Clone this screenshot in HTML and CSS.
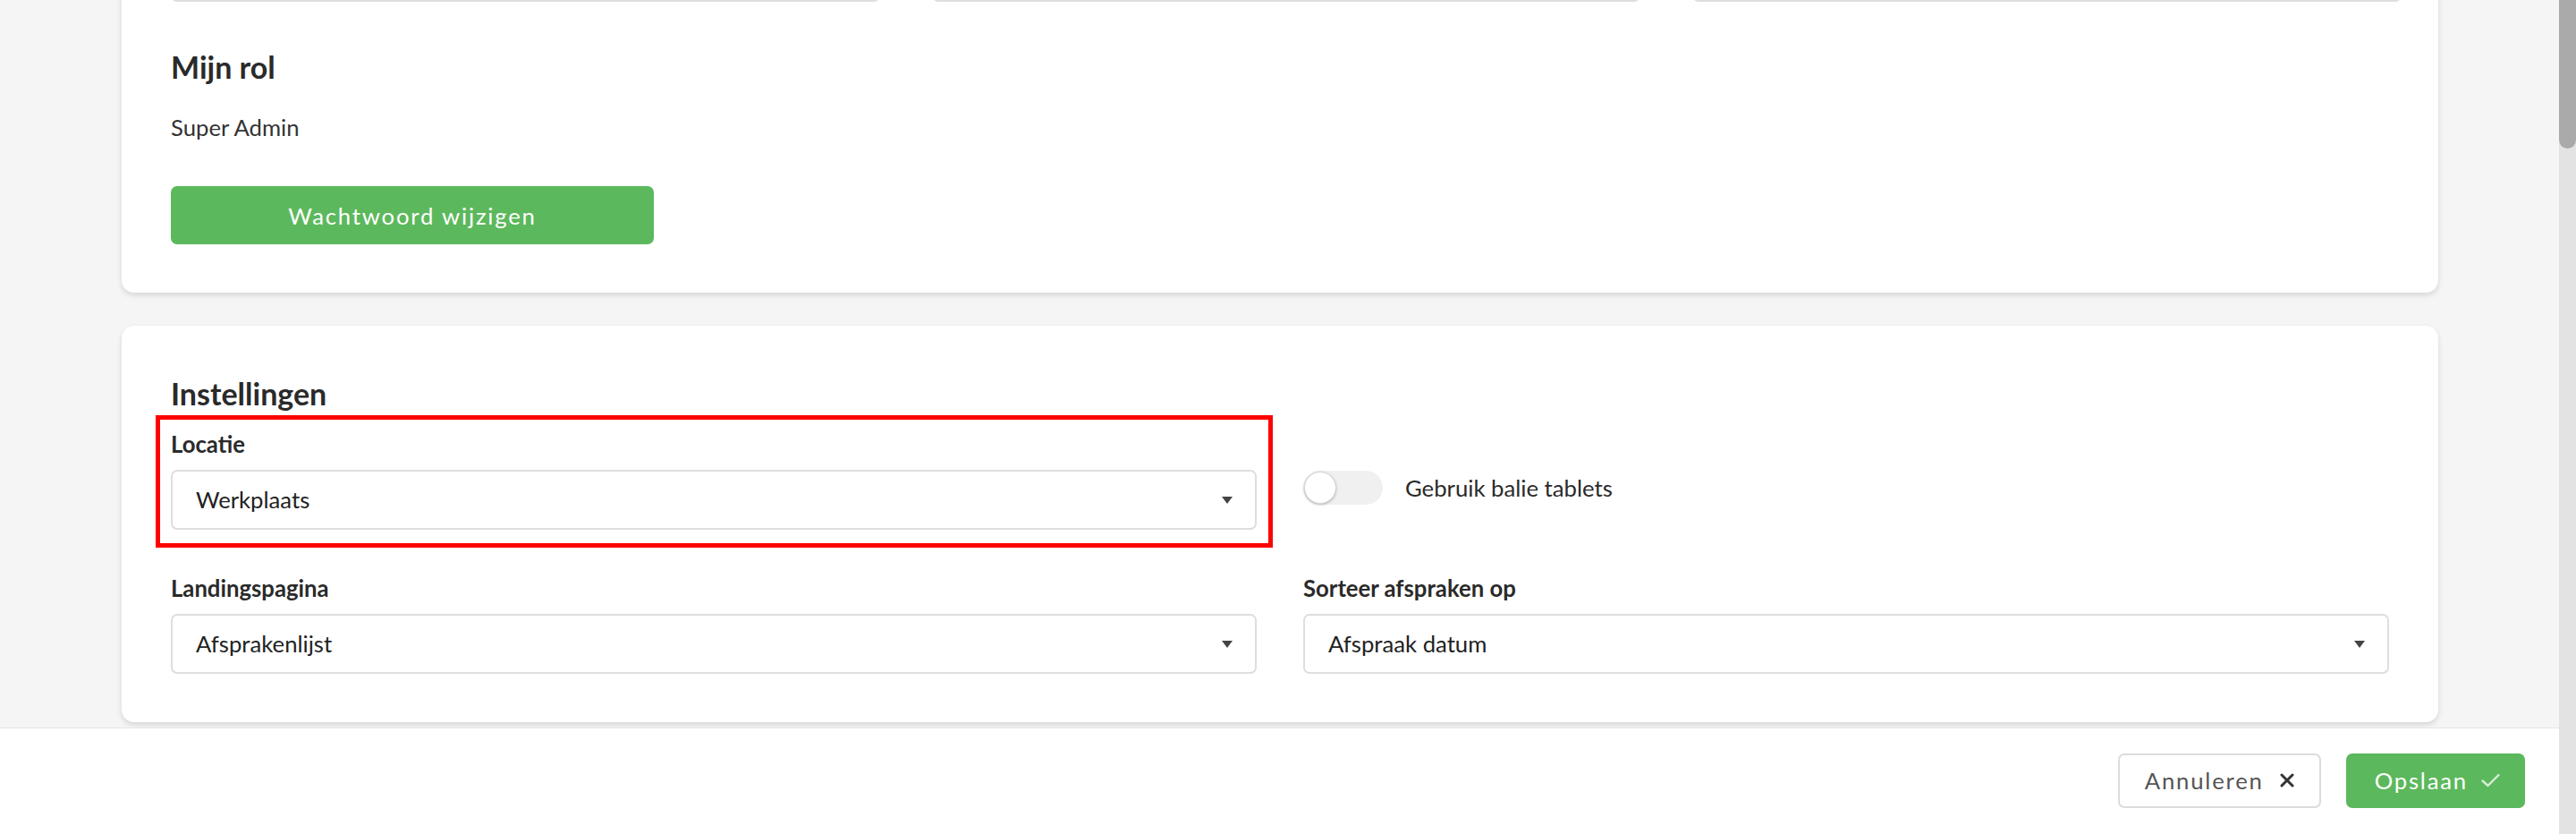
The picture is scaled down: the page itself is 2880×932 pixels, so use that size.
FILE: index.html
```html
<!DOCTYPE html>
<html lang="nl">
<head>
  <meta charset="UTF-8"/>
  <meta name="viewport" content="width=device-width, initial-scale=1.0"/>
  <title>Mijn profiel</title>
  <link rel="stylesheet" href="styles.css">
</head>
<body>

  <div class="shell">
    <main class="scroll-area">
      <div class="content">

        <!-- Profiel -->
        <section class="card">
          <div class="field-row">
            <div class="input"></div>
            <div class="input"></div>
            <div class="input"></div>
          </div>
          <h2 class="title-first">Mijn rol</h2>
          <p class="role">Super Admin</p>
          <button class="btn btn-green btn-wide">Wachtwoord wijzigen</button>
        </section>

        <!-- Instellingen -->
        <section class="card card-settings">
          <h2>Instellingen</h2>
          <div class="form-grid">
            <div class="form-group highlight">
              <label>Locatie</label>
              <div class="select">
                <span>Werkplaats</span>
                <svg class="caret" width="12" height="8" viewBox="0 0 12 8"><path d="M0 0 H12 L6 8 Z" fill="#444"/></svg>
              </div>
            </div>
            <div class="form-group toggle-group">
              <span class="toggle"><span class="knob"></span></span>
              <span class="toggle-label">Gebruik balie tablets</span>
            </div>
            <div class="form-group">
              <label>Landingspagina</label>
              <div class="select">
                <span>Afsprakenlijst</span>
                <svg class="caret" width="12" height="8" viewBox="0 0 12 8"><path d="M0 0 H12 L6 8 Z" fill="#444"/></svg>
              </div>
            </div>
            <div class="form-group">
              <label>Sorteer afspraken op</label>
              <div class="select">
                <span>Afspraak datum</span>
                <svg class="caret" width="12" height="8" viewBox="0 0 12 8"><path d="M0 0 H12 L6 8 Z" fill="#444"/></svg>
              </div>
            </div>
          </div>
        </section>

      </div>
    </main>

    <footer class="footer">
      <button class="btn btn-outline">
        Annuleren
        <svg width="16" height="16" viewBox="0 0 16 16"><path d="M2 2 L14 14 M14 2 L2 14" stroke="#333" stroke-width="3" stroke-linecap="round"/></svg>
      </button>
      <button class="btn btn-green btn-save">
        Opslaan
        <svg width="21" height="16" viewBox="0 0 21 16"><path d="M1.5 8.5 L7.5 14 L19.5 2" fill="none" stroke="rgba(255,255,255,0.75)" stroke-width="2.4" stroke-linecap="round" stroke-linejoin="round"/></svg>
      </button>
    </footer>
  </div>

  <div class="scrollbar"><div class="thumb"></div></div>

</body>
</html>
```

FILE: styles.css
```css
* {
  margin: 0; padding: 0;
  box-sizing: border-box;
  font-family: Lato, 'Open Sans', sans-serif;
}

body {
  display: flex;
  height: 100vh;
  overflow: hidden;
  background: #f5f5f5;
  color: #333;
  font-size: 25.7px;
  line-height: 1.2;
}

.shell {
  flex: 1;
  display: flex;
  flex-direction: column;
  min-width: 0;
}

.scroll-area {
  flex: 1;
  overflow: hidden;
  padding: 0 135px 0 136px;
}

/* page is scrolled a bit, top of first card is out of view */
.content {
  margin-top: -120px;
}

.card {
  background: #fff;
  border-radius: 14px;
  padding: 55px 55px 54px;
  box-shadow: 0 3px 6px rgba(0,0,0,0.13);
  margin-bottom: 37px;
}

.card-settings {
  padding-top: 55px;
}

.card h2 {
  font-size: 34px;
  font-weight: 700;
  line-height: 41px;
  color: #2a2a2a;
}

.field-row {
  display: grid;
  grid-template-columns: repeat(3, 1fr);
  gap: 58px;
  margin-right: -14px;
}

.input {
  height: 67px;
  border: 2px solid #dedede;
  border-radius: 7px;
}

.card h2.title-first {
  margin-top: 52px;
}

.role {
  margin-top: 32px;
  line-height: 31px;
}

.btn {
  display: inline-flex;
  align-items: center;
  justify-content: center;
  height: 61px;
  border-radius: 7px;
  border: none;
  font-size: 25.7px;
  letter-spacing: 1.8px;
  cursor: pointer;
}

.btn-green {
  background: #5cb85c;
  color: #fff;
}

.btn-wide {
  width: 540px;
  height: 65px;
  margin-top: 50px;
}

/* form */
.form-grid {
  display: grid;
  grid-template-columns: 1fr 1fr;
  column-gap: 52px;
  row-gap: 50px;
  margin-top: 21px;
}

.form-group label {
  display: block;
  font-weight: 700;
  line-height: 31px;
  margin-bottom: 13px;
  color: #2a2a2a;
}

.select {
  display: flex;
  align-items: center;
  justify-content: space-between;
  height: 67px;
  padding: 0 25px 0 26px;
  border: 2px solid #dedede;
  border-radius: 7px;
  color: #222;
}

.highlight {
  position: relative;
}

.highlight::after {
  content: "";
  position: absolute;
  top: -17px; left: -17px; right: -18px; bottom: -20px;
  border: 5px solid #ff0000;
}

.toggle-group {
  display: flex;
  align-items: flex-start;
  padding-top: 45px;
}

.toggle {
  width: 89px;
  height: 38px;
  border-radius: 19px;
  background: #f0f0f0;
  padding: 1px;
  flex-shrink: 0;
}

.knob {
  display: block;
  width: 36px;
  height: 36px;
  border-radius: 50%;
  background: #fff;
  border: 1px solid #d6d6d6;
  box-shadow: 0 1px 3px rgba(0,0,0,0.25);
}

.toggle-label {
  margin-left: 25px;
  line-height: 38px;
  color: #2a2a2a;
}

/* footer */
.footer {
  height: 119px;
  flex-shrink: 0;
  background: #fff;
  border-top: 1px solid #e6e6e6;
  display: flex;
  align-items: center;
  justify-content: flex-end;
  gap: 28px;
  padding-right: 38px;
  padding-bottom: 2px;
}

.btn-outline {
  background: #fff;
  border: 2px solid #dcdcdc;
  color: #555;
  padding: 0 28px;
  gap: 18px;
}

.btn-save {
  padding: 0 28px 0 32px;
  gap: 15px;
}

/* fake scrollbar */
.scrollbar {
  width: 19px;
  flex-shrink: 0;
  background: #e3e3e3;
}

.thumb {
  height: 166px;
  background: #aaa;
  border-radius: 0 0 10px 10px;
}
```
